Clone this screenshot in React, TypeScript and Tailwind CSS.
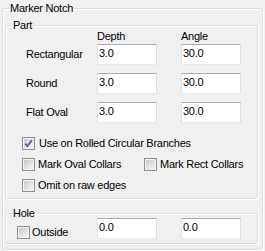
import React from "react";

function Group({
  title,
  className,
  children,
}: {
  title: string;
  className: string;
  children?: React.ReactNode;
}) {
  return (
    <div
      className={`relative rounded-[3px] border border-[#d5dfe5] shadow-[inset_1px_1px_0_#fff,1px_1px_0_#fff] ${className}`}
    >
      <span className="absolute left-[6px] top-[-7px] bg-[#f0f0f0] px-[1px] leading-[13px] whitespace-nowrap">
        {title}
      </span>
      {children}
    </div>
  );
}

function TextBox({ value, className = "" }: { value: string; className?: string }) {
  return (
    <input
      readOnly
      value={value}
      className={`h-[21px] w-[60px] shrink-0 border border-t-[#abadb3] border-l-[#e2e3ea] border-r-[#dbdfe6] border-b-[#e3e9ef] bg-white pl-[1px] pt-0 pb-[3px] leading-[13px] outline-none ${className}`}
    />
  );
}

function Check({ checked = false }: { checked?: boolean }) {
  return (
    <span className="relative flex h-[13px] w-[13px] shrink-0 items-center justify-center border border-[#8e8f8f] bg-[#f4f4f4]">
      <span className="h-[9px] w-[9px] bg-linear-to-br from-[#c6c9cd] to-[#f6f6f6]" />
      {checked && (
        <svg
          className="absolute left-[1px] top-[1px]"
          width="9"
          height="9"
          viewBox="0 0 9 9"
        >
          <path
            d="M1.3 4.6 L3.4 7.2 L7.8 1.2"
            fill="none"
            stroke="#4a5e9c"
            strokeWidth="1.7"
            strokeLinejoin="round"
          />
        </svg>
      )}
    </span>
  );
}

function CheckLabel({
  label,
  checked,
  gap = "gap-[3px]",
}: {
  label: string;
  checked?: boolean;
  gap?: string;
}) {
  return (
    <label className={`flex items-center ${gap} whitespace-nowrap leading-[13px]`}>
      <Check checked={checked} />
      <span>{label}</span>
    </label>
  );
}

function Row({ label, depth, angle, className = "" }: { label: string; depth: string; angle: string; className?: string }) {
  return (
    <div className={`flex h-[21px] items-center ${className}`}>
      <span className="ml-[20px] w-[71px] leading-[13px]">{label}</span>
      <TextBox value={depth} />
      <TextBox value={angle} className="ml-[24px]" />
    </div>
  );
}

export default function App() {
  return (
    <div className="h-[251px] w-[265px] overflow-hidden bg-[#f0f0f0] pl-[2px] pt-[8px] font-['Liberation_Sans',Arial,sans-serif] text-[11px] tracking-[-0.25px] text-black">
      <Group title="Marker Notch" className="h-[242px] w-[261px]">
        <Group title="Part" className="ml-[2px] mt-[16px] h-[174px] w-[253px]">
          <div className="pt-[4px]">
            <div className="flex h-[13px] leading-[13px]">
              <span className="ml-[91px] w-[84px]">Depth</span>
              <span>Angle</span>
            </div>
            <Row label="Rectangular" depth="3.0" angle="30.0" className="mt-[1px]" />
            <Row label="Round" depth="3.0" angle="30.0" className="mt-[8px]" />
            <Row label="Flat Oval" depth="3.0" angle="30.0" className="mt-[8px]" />
            <div className="mt-[10px] flex flex-col pl-[16px]">
              <div className="flex h-[21px] items-center">
                <CheckLabel label="Use on Rolled Circular Branches" checked gap="gap-[4px]" />
              </div>
              <div className="flex h-[21px] items-center">
                <div className="w-[122px]">
                  <CheckLabel label="Mark Oval Collars" />
                </div>
                <CheckLabel label="Mark Rect Collars" />
              </div>
              <div className="flex h-[21px] items-center">
                <CheckLabel label="Omit on raw edges" />
              </div>
            </div>
          </div>
        </Group>
        <Group title="Hole" className="ml-[2px] mt-[14px] h-[31px] w-[253px]">
          <div className="flex items-start pl-[11px] pt-[4px]">
            <div className="mt-[8px] w-[80px]">
              <CheckLabel label="Outside" gap="gap-[2px]" />
            </div>
            <TextBox value="0.0" />
            <TextBox value="0.0" className="ml-[24px]" />
          </div>
        </Group>
      </Group>
    </div>
  );
}
